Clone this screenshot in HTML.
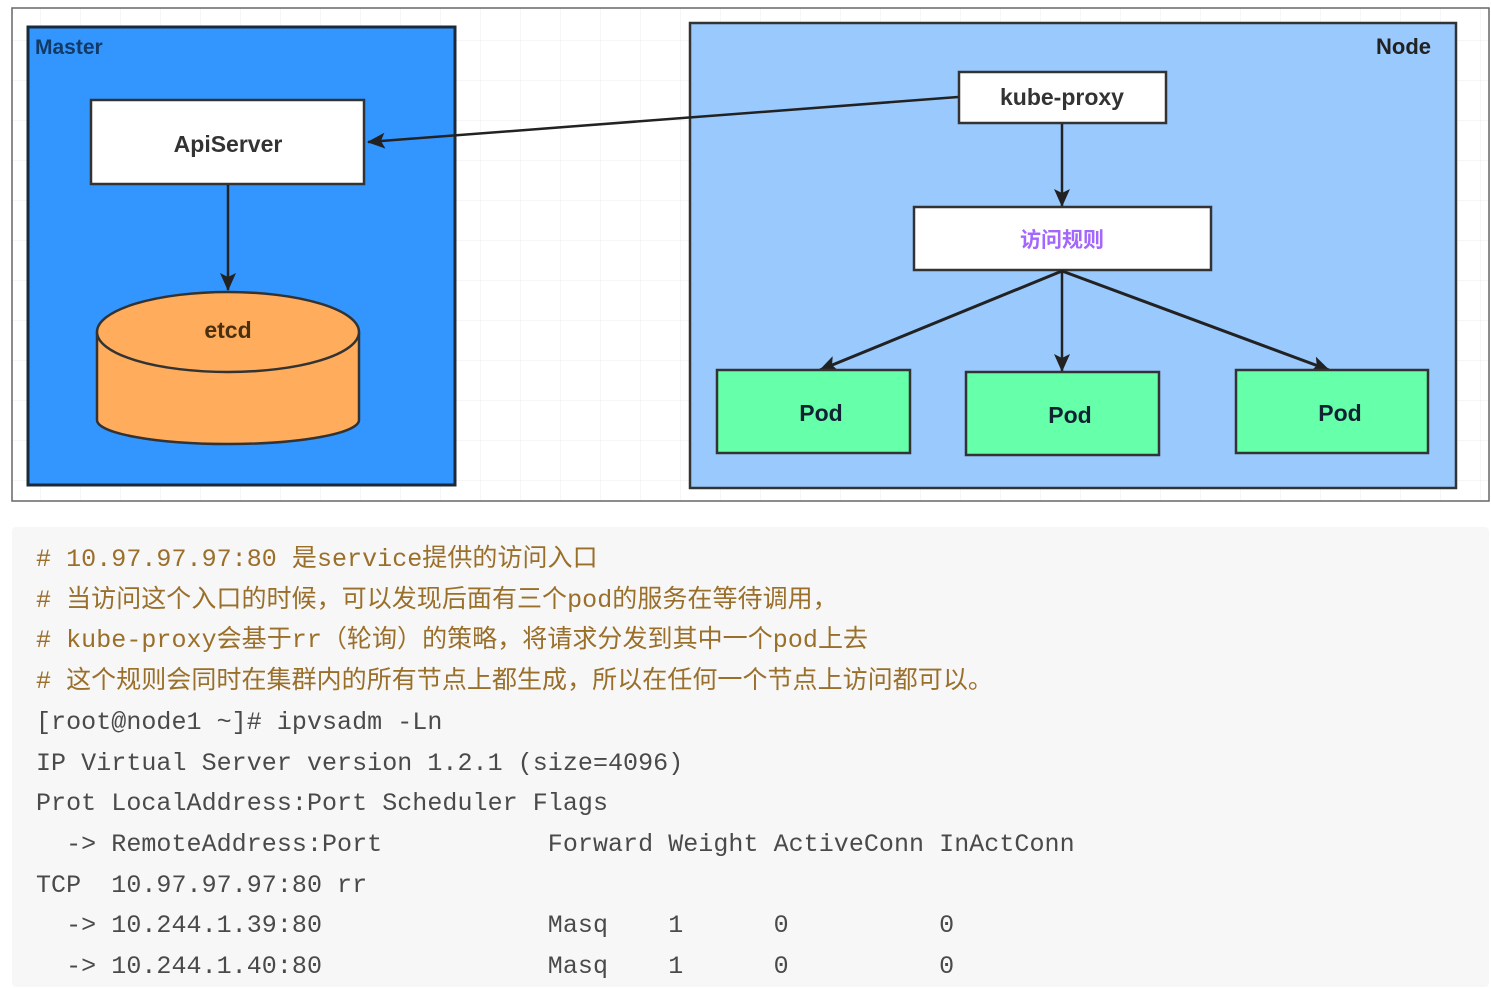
<!DOCTYPE html>
<html><head><meta charset="utf-8"><style>
body{margin:0;width:1491px;height:976px;background:#fff;overflow:hidden;position:relative}
.code{position:absolute;left:12px;top:527px;width:1477px;height:460px;background:#f7f7f7;border-radius:4px}
.code pre{margin:0;position:absolute;left:24px;top:13px;font-family:"Liberation Mono","Noto Sans CJK SC",monospace;font-size:25px;line-height:40.7px;color:#4a4a4a;letter-spacing:0.05px}
.c{color:#9a6f2a}
</style></head><body>
<svg width="1491" height="520" style="position:absolute;left:0;top:0" font-family="Liberation Sans, Noto Sans CJK SC, sans-serif">
<defs>
<pattern id="g" width="40" height="40" patternUnits="userSpaceOnUse"><path d="M40 0H0V40" fill="none" stroke="#eee" stroke-width="1"/></pattern>
<marker id="a" markerWidth="18" markerHeight="16" refX="17" refY="8" orient="auto" markerUnits="userSpaceOnUse" viewBox="0 0 18 16"><path d="M0 0L18 8L0 16L4 8z" fill="#222"/></marker>
</defs>
<rect x="12" y="8" width="1477" height="493" fill="url(#g)" stroke="#666" stroke-width="1.5"/>
<rect x="28" y="27" width="427" height="458" fill="#3396ff" stroke="#1a2a3a" stroke-width="3"/>
<text x="35" y="54" font-size="21" font-weight="bold" fill="#123a66">Master</text>
<rect x="91" y="100" width="273" height="84" fill="#fff" stroke="#333" stroke-width="2.5"/>
<text x="228" y="152" font-size="23" font-weight="bold" fill="#333" text-anchor="middle">ApiServer</text>
<line x1="228" y1="185" x2="228" y2="290" stroke="#222" stroke-width="2.5" marker-end="url(#a)"/>
<path d="M97 332 V420 A131 24 0 0 0 359 420 V332" fill="#ffad5c" stroke="#333" stroke-width="2.5"/>
<ellipse cx="228" cy="332" rx="131" ry="40" fill="#ffad5c" stroke="#333" stroke-width="2.5"/>
<text x="228" y="338" font-size="23" font-weight="bold" fill="#4a3010" text-anchor="middle">etcd</text>
<rect x="690" y="23" width="766" height="465" fill="#99c9fd" stroke="#333" stroke-width="2.5"/>
<text x="1431" y="54" font-size="22" font-weight="bold" fill="#222" text-anchor="end">Node</text>
<line x1="958" y1="97" x2="368" y2="142" stroke="#222" stroke-width="2.5" marker-end="url(#a)"/>
<rect x="959" y="72" width="207" height="51" fill="#fff" stroke="#333" stroke-width="2.5"/>
<text x="1062" y="105" font-size="23" font-weight="bold" fill="#333" text-anchor="middle">kube-proxy</text>
<line x1="1062" y1="124" x2="1062" y2="206" stroke="#222" stroke-width="2.5" marker-end="url(#a)"/>
<rect x="914" y="207" width="297" height="63" fill="#fff" stroke="#333" stroke-width="2.5"/>
<text x="1062" y="247" font-size="21" font-weight="bold" fill="#a366ff" text-anchor="middle">访问规则</text>
<line x1="1062" y1="271" x2="820" y2="370" stroke="#222" stroke-width="3" marker-end="url(#a)"/>
<line x1="1062" y1="271" x2="1062" y2="371" stroke="#222" stroke-width="2.5" marker-end="url(#a)"/>
<line x1="1062" y1="271" x2="1329" y2="370" stroke="#222" stroke-width="3" marker-end="url(#a)"/>
<rect x="717" y="370" width="193" height="83" fill="#66ffaa" stroke="#333" stroke-width="2.5"/>
<rect x="966" y="372" width="193" height="83" fill="#66ffaa" stroke="#333" stroke-width="2.5"/>
<rect x="1236" y="370" width="192" height="83" fill="#66ffaa" stroke="#333" stroke-width="2.5"/>
<text x="821" y="421" font-size="23" font-weight="bold" fill="#123" text-anchor="middle">Pod</text>
<text x="1070" y="423" font-size="23" font-weight="bold" fill="#123" text-anchor="middle">Pod</text>
<text x="1340" y="421" font-size="23" font-weight="bold" fill="#123" text-anchor="middle">Pod</text>
</svg>
<div class="code"><pre><span class="c"># 10.97.97.97:80 是service提供的访问入口
# 当访问这个入口的时候，可以发现后面有三个pod的服务在等待调用，
# kube-proxy会基于rr（轮询）的策略，将请求分发到其中一个pod上去
# 这个规则会同时在集群内的所有节点上都生成，所以在任何一个节点上访问都可以。</span>
[root@node1 ~]# ipvsadm -Ln
IP Virtual Server version 1.2.1 (size=4096)
Prot LocalAddress:Port Scheduler Flags
  -> RemoteAddress:Port           Forward Weight ActiveConn InActConn
TCP  10.97.97.97:80 rr
  -> 10.244.1.39:80               Masq    1      0          0
  -> 10.244.1.40:80               Masq    1      0          0
</pre></div>
</body></html>
